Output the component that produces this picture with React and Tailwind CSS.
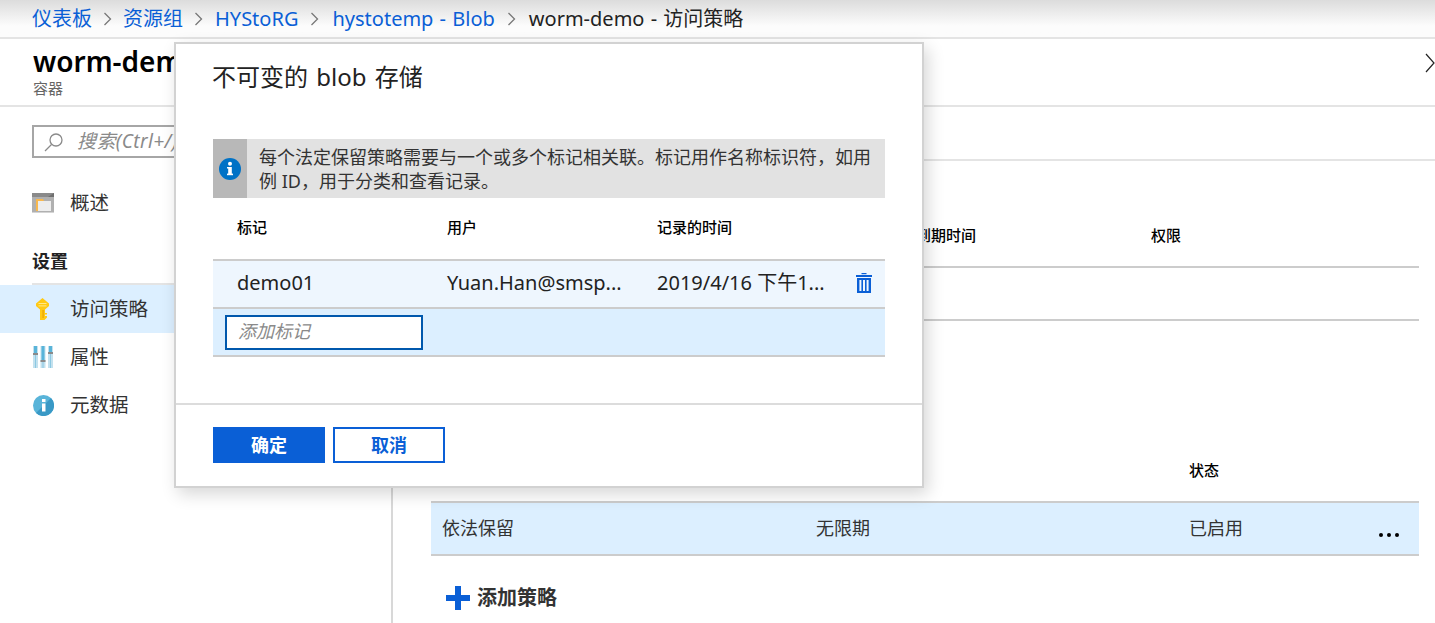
const Chevron = ({ className }) => (
  <svg className={className} width="10" height="16" viewBox="0 0 10 16" fill="none">
    <path d="M1.5 2l6 6-6 6" stroke="#777" strokeWidth="1.3" />
  </svg>
);

const OverviewIcon = () => (
  <svg width="22" height="20" viewBox="0 0 22 20">
    <rect x="0" y="0" width="22" height="20" fill="#b0b0b0" />
    <rect x="0" y="0" width="22" height="4" fill="#8a8a8a" />
    <path d="M16 4l6-4v4z" fill="#6f6f6f" />
    <path d="M4 6h7l1 2h6v10H4z" fill="#f8b84e" />
    <rect x="6" y="8" width="13" height="10" fill="#ededed" />
    <rect x="0" y="19" width="22" height="1" fill="#d4d4d4" />
  </svg>
);

const KeyIcon = () => (
  <svg width="13" height="22" viewBox="0 0 13 22">
    <path d="M6.5 0l6.5 5.5V8l-4 3.5V15h2v1.5H9V18h2v1.5L8.5 22H4V11.5L0 8V5.5z" fill="#ffc914" />
    <rect x="2.5" y="5" width="8" height="1" fill="#ffe98a" />
    <rect x="2.5" y="7.4" width="8" height="1" fill="#ffe98a" />
    <rect x="6.5" y="12" width="1.2" height="8" fill="#e8a400" />
  </svg>
);

const SlidersIcon = () => (
  <svg width="20" height="22" viewBox="0 0 20 22">
    <rect x="0" y="0" width="5" height="22" fill="#c3e1ee" />
    <rect x="7.5" y="0" width="5" height="22" fill="#c3e1ee" />
    <rect x="15" y="0" width="5" height="22" fill="#c3e1ee" />
    <rect x="1" y="0" width="3" height="8" fill="#59b4d9" />
    <rect x="8.5" y="0" width="3" height="15" fill="#59b4d9" />
    <rect x="16" y="0" width="3" height="7" fill="#59b4d9" />
    <rect x="2" y="9" width="1" height="13" fill="#8cc8e2" />
    <rect x="9.5" y="16" width="1" height="6" fill="#8cc8e2" />
    <rect x="17" y="8" width="1" height="14" fill="#8cc8e2" />
    <rect x="0" y="7" width="5" height="2" fill="#8a8a8a" />
    <rect x="7.5" y="14" width="5" height="2" fill="#8a8a8a" />
    <rect x="15" y="6" width="5" height="2" fill="#8a8a8a" />
  </svg>
);

const MetaIcon = () => (
  <svg width="21" height="21" viewBox="0 0 21 21">
    <circle cx="10.5" cy="10.5" r="10.5" fill="#59b4d9" />
    <path d="M18 3a10.5 10.5 0 0 1-15 15z" fill="#3999c6" />
    <rect x="9" y="8.5" width="3.5" height="8" fill="#fff" />
    <rect x="9" y="4" width="3.5" height="3" fill="#fff" />
  </svg>
);

const InfoIcon = () => (
  <svg width="22" height="22" viewBox="0 0 22 22">
    <circle cx="11" cy="11" r="11" fill="#0072c6" />
    <rect x="9.2" y="9" width="3.6" height="8" fill="#fff" />
    <rect x="8" y="9" width="3" height="1.5" fill="#fff" />
    <rect x="8" y="15.6" width="6" height="1.6" fill="#fff" />
    <circle cx="11" cy="5.8" r="2" fill="#fff" />
  </svg>
);

const TrashIcon = () => (
  <svg className="ml-[1px]" width="16" height="20" viewBox="0 0 16 20" fill="#0a5fd6">
    <rect x="5.5" y="0" width="5" height="1.2" />
    <rect x="0" y="2" width="16" height="2" />
    <path d="M1 5h14v15H1zM3.4 7v11h2V7zM7 7v11h2V7zM10.6 7v11h2V7z" fillRule="evenodd" />
  </svg>
);

const NavItem = ({ icon, label, active }) => (
  <div className={`flex h-12 items-center ${active ? 'bg-[#dcefff]' : ''}`}>
    <div className="flex w-[70px] shrink-0 items-center pl-[32px]">{icon}</div>
    <span className="text-[19.5px] text-[#333]">{label}</span>
  </div>
);

export default function App() {
  return (
    <div className="relative flex h-[623px] w-[1435px] flex-col overflow-hidden bg-white font-['Noto_Sans','Noto_Sans_CJK_SC',sans-serif] text-[#222]">
      {/* breadcrumb */}
      <div className="flex h-[39px] shrink-0 items-center border-b-2 border-[#e4e4e4] bg-gradient-to-b from-[#dcdcdc] to-[#fcfcfc] to-70% pl-[32px] text-[20px] leading-none [word-spacing:1px]">
        <span className="text-[#0a5fd6]">仪表板</span>
        <Chevron className="mx-[10.5px]" />
        <span className="text-[#0a5fd6]">资源组</span>
        <Chevron className="mx-[11px]" />
        <span className="text-[#0a5fd6]">HYStoRG</span>
        <Chevron className="mx-[12px]" />
        <span className="text-[#0a5fd6]">hystotemp - Blob</span>
        <Chevron className="mx-[12px]" />
        <span className="text-[#222]">worm-demo - 访问策略</span>
      </div>

      {/* title */}
      <div className="flex h-[68px] shrink-0 items-start justify-between border-b-2 border-[#e4e4e4] pl-[33px]">
        <div>
          <div className="mt-[3px] text-[28px] leading-[38px] font-semibold text-black">worm-demo - 访问策略</div>
          <div className="-mt-[1px] text-[15px] leading-[18px] text-[#666]">容器</div>
        </div>
        <svg className="mt-[14px]" width="10" height="20" viewBox="0 0 10 20" fill="none">
          <path d="M1 1l8 9-8 9" stroke="#222" strokeWidth="1.2" />
        </svg>
      </div>

      <div className="flex min-h-0 flex-1">
        {/* sidebar */}
        <div className="w-[393px] shrink-0 border-r-2 border-[#d8d8d8]">
          <div className="mt-[18px] ml-[32px] flex h-[33px] w-[300px] items-center border-2 border-[#a6a6a6] pl-[10px]">
            <svg width="20" height="20" viewBox="0 0 20 20" fill="none" stroke="#8a8a8a" strokeWidth="1.3">
              <circle cx="12" cy="8" r="6" />
              <path d="M7.5 12.5L1 19" />
            </svg>
            <span className="ml-[13px] text-[19px] tracking-[0.4px] text-[#8a8a8a] italic">搜索(Ctrl+/)</span>
          </div>
          <div className="mt-[21px]">
            <NavItem icon={<OverviewIcon />} label="概述" />
          </div>
          <div className="mt-[22px] ml-[32px] h-[36px] border-b-2 border-[#e4e4e4] text-[18px] leading-[24px] font-semibold text-[#222]">
            设置
          </div>
          <div>
            <NavItem icon={<span className="ml-[4px] flex"><KeyIcon /></span>} label="访问策略" active />
            <NavItem icon={<span className="ml-[1px] flex"><SlidersIcon /></span>} label="属性" />
            <NavItem icon={<span className="ml-[1px] flex"><MetaIcon /></span>} label="元数据" />
          </div>
        </div>

        {/* content */}
        <div className="min-w-0 flex-1">
          <div className="h-[54px] border-b-2 border-[#e4e4e4]" />
          <div className="mr-[16px] ml-[38px]">
            <div className="mt-[58px] grid h-[49px] grid-cols-[485px_235px_1fr] items-center border-b-2 border-[#cccccc] pb-[14px] text-[15px] font-medium text-black">
              <span className="pl-[10px]">标记</span>
              <span>到期时间</span>
              <span>权限</span>
            </div>
            <div className="h-[53px] border-b-2 border-[#cccccc]" />

            <div className="mt-[130px] grid h-[50px] grid-cols-[385px_373px_1fr] items-center pb-[12px] text-[15px] font-medium text-black">
              <span className="pl-[11px]">类型</span>
              <span>保留期</span>
              <span>状态</span>
            </div>
            <div className="grid h-[55px] grid-cols-[385px_373px_1fr_40px] items-center border-y-2 border-[#cccccc] bg-[#dcefff] text-[18px] text-[#333]">
              <span className="pl-[11px]">依法保留</span>
              <span>无限期</span>
              <span>已启用</span>
              <span className="flex translate-y-[6px] gap-[4px]">
                <span className="size-[4px] rounded-full bg-black" />
                <span className="size-[4px] rounded-full bg-black" />
                <span className="size-[4px] rounded-full bg-black" />
              </span>
            </div>
            <div className="mt-[30px] ml-[15px] flex h-[24px] items-center gap-[7px]">
              <svg width="24" height="24" viewBox="0 0 24 24" fill="#0a5fd6">
                <path d="M9 0h6v9h9v6h-9v9H9v-9H0V9h9z" />
              </svg>
              <span className="text-[20px] font-semibold text-[#333]">添加策略</span>
            </div>
          </div>
        </div>
      </div>

      {/* dialog */}
      <div className="absolute top-[42px] left-[174px] flex h-[446px] w-[750px] flex-col border-2 border-[#d2d2d2] bg-white shadow-[4px_6px_16px_rgba(0,0,0,0.16)]">
        <div className="mt-[15px] ml-[36px] text-[24px] leading-[36px] text-[#222] [word-spacing:2px]">不可变的 blob 存储</div>
        <div className="mt-[44px] ml-[37px] flex h-[59px] w-[672px] bg-[#e2e2e2]">
          <div className="flex w-[34px] shrink-0 items-center justify-center bg-[#b8b8b8]">
            <InfoIcon />
          </div>
          <p className="pt-[6px] pl-[12px] text-[18px] leading-[24px] text-[#333]">
            每个法定保留策略需要与一个或多个标记相关联。标记用作名称标识符，如用例 ID，用于分类和查看记录。
          </p>
        </div>
        <div className="ml-[37px] w-[672px]">
          <div className="grid h-[63px] grid-cols-[210px_210px_1fr] items-center border-b-2 border-[#cccccc] pb-[2px] pl-[24px] text-[15px] font-medium text-black">
            <span>标记</span>
            <span>用户</span>
            <span>记录的时间</span>
          </div>
          <div className="grid h-[48px] grid-cols-[210px_210px_198px_1fr] items-center border-b-2 border-[#cccccc] bg-[#eef6fe] pb-[2px] pl-[24px] text-[20px] text-[#222]">
            <span>demo01</span>
            <span>Yuan.Han@smsp...</span>
            <span className="whitespace-nowrap">2019/4/16 下午1...</span>
            <TrashIcon />
          </div>
          <div className="flex h-[48px] items-center border-b-2 border-[#cccccc] bg-[#dcefff] pl-[12px]">
            <div className="flex h-[35px] w-[198px] items-center border-2 border-[#0058ad] bg-white pb-[2px] pl-[11px] text-[18px] text-[#8a8a8a] italic">
              添加标记
            </div>
          </div>
        </div>
        <div className="mt-[46px] border-t-2 border-[#dcdcdc] pt-[22px] pl-[37px]">
          <div className="flex gap-[8px] text-[18px] font-semibold">
            <div className="flex h-[36px] w-[112px] items-center justify-center bg-[#0a5fd6] text-white">确定</div>
            <div className="flex h-[36px] w-[112px] items-center justify-center border-2 border-[#0a5fd6] text-[#0a5fd6]">取消</div>
          </div>
        </div>
      </div>
    </div>
  );
}
